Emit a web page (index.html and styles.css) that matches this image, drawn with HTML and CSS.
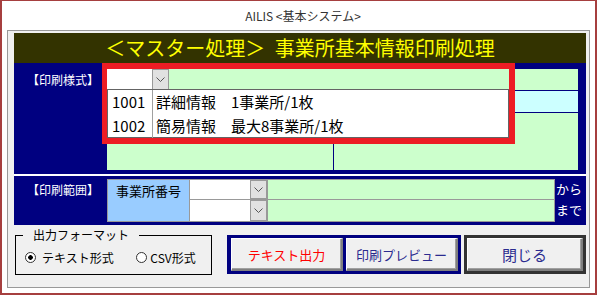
FILE: index.html
```html
<!DOCTYPE html>
<html lang="ja">
<head>
  <meta charset="UTF-8" />
  <title>AILIS &lt;基本システム&gt;</title>
  <link rel="stylesheet" href="styles.css">
</head>
<body>
  <div class="window">
    <div class="caption">AILIS &lt;基本システム&gt;</div>
    <div class="frame">
      <div class="title-bar">＜マスター処理＞ 事業所基本情報印刷処理</div>

      <div class="section style-section">
        <div class="section-label">【印刷様式】</div>
        <div class="style-body">
          <div class="style-row">
            <div class="combo">
              <div class="combo-value"></div>
              <div class="combo-btn"><svg width="9" height="5" viewBox="0 0 9 5"><polyline points="0.5,0.5 4.5,4.5 8.5,0.5" fill="none" stroke="#555" stroke-width="1"/></svg></div>
            </div>
          </div>
          <div class="style-row cyan"></div>
          <div class="style-row split">
            <div class="split-left"></div>
            <div class="split-right"></div>
          </div>
          <div class="dropdown">
            <div class="dropdown-item"><span class="code">1001</span><span class="name">詳細情報　1事業所/1枚</span></div>
            <div class="dropdown-item"><span class="code">1002</span><span class="name">簡易情報　最大8事業所/1枚</span></div>
          </div>
        </div>
        <div class="highlight"></div>
      </div>

      <div class="section range-section">
        <div class="section-label">【印刷範囲】</div>
        <div class="range-grid">
          <div class="range-name">事業所番号</div>
          <div class="combo">
            <div class="combo-value"></div>
            <div class="combo-btn"><svg width="9" height="5" viewBox="0 0 9 5"><polyline points="0.5,0.5 4.5,4.5 8.5,0.5" fill="none" stroke="#555" stroke-width="1"/></svg></div>
          </div>
          <div class="range-field"></div>
          <div class="range-suffix">から</div>
          <div class="combo second">
            <div class="combo-value"></div>
            <div class="combo-btn"><svg width="9" height="5" viewBox="0 0 9 5"><polyline points="0.5,0.5 4.5,4.5 8.5,0.5" fill="none" stroke="#555" stroke-width="1"/></svg></div>
          </div>
          <div class="range-field second"></div>
          <div class="range-suffix">まで</div>
        </div>
      </div>

      <div class="actions">
        <fieldset class="format-box">
          <legend>出力フォーマット</legend>
          <label class="radio radio-first"><span class="radio-mark checked"></span>テキスト形式</label>
          <label class="radio radio-second"><span class="radio-mark"></span>CSV形式</label>
        </fieldset>
        <div class="button-group">
          <button class="btn btn-text">テキスト出力</button>
          <button class="btn">印刷プレビュー</button>
        </div>
        <div class="close-frame">
          <button class="btn btn-close">閉じる</button>
        </div>
      </div>
    </div>
  </div>
</body>
</html>
```

FILE: styles.css
```css
* {
  box-sizing: border-box;
}

html, body {
  margin: 0;
  padding: 0;
  background: #fff;
  font-family: "Noto Sans CJK JP", "Noto Sans", sans-serif;
}

.window {
  width: 597px;
  height: 295px;
  border: 2px solid #a63f3f;
  border-top-width: 1px;
  background: #fff;
  overflow: hidden;
}

.caption {
  height: 29px;
  line-height: 30px;
  text-align: center;
  font-size: 12px;
  color: #333;
  padding-left: 9px;
}

.frame {
  margin-left: 5px;
  width: 583px;
  height: 258px;
  border: 1px solid #999;
  background: #f0f0f0;
  padding: 2px 3px 0 6px;
}

.title-bar {
  height: 30px;
  line-height: 30px;
  background: #333300;
  color: #ffff00;
  font-size: 20px;
  text-align: center;
  word-spacing: 5px;
}

.section {
  display: flex;
  position: relative;
  background: #000080;
}

.style-section {
  height: 111px;
  padding: 6px 8px 4px 0;
}

.section-label {
  width: 93px;
  flex: none;
  padding-left: 13px;
  color: #fff;
  font-size: 12px;
  line-height: 21px;
  white-space: nowrap;
}

.style-body {
  flex: 1;
  position: relative;
  display: flex;
  flex-direction: column;
  background: #ccffcc;
}

.style-row {
  height: 21px;
  flex: none;
}

.style-row.cyan {
  height: 23px;
  background: #ccffff;
  border-top: 1px solid #000080;
  border-bottom: 1px solid #000080;
}

.style-row.split {
  flex: 1;
  display: flex;
}

.split-left {
  width: 227px;
  border-right: 1px solid #000080;
}

.combo {
  display: flex;
  width: 62px;
  height: 21px;
}

.combo-value {
  flex: 1;
  background: #fff;
}

.combo-btn {
  width: 17px;
  flex: none;
  display: flex;
  align-items: center;
  justify-content: center;
  background: #e1e1e1;
  border: 1px solid #999;
}

.dropdown {
  position: absolute;
  left: 0;
  top: 20px;
  width: 402px;
  height: 49px;
  background: #fff;
  border: 1px solid #646464;
  font-size: 15px;
  color: #000;
}

.dropdown-item {
  display: flex;
  height: 24px;
  line-height: 24px;
}

.code {
  width: 45px;
  padding-left: 4px;
  border-right: 1px solid #a0a0a0;
}

.name {
  padding-left: 3px;
  white-space: pre;
}

.highlight {
  position: absolute;
  left: 88px;
  top: 0;
  width: 413px;
  height: 81px;
  border: 6px solid #ed1c24;
  border-left-width: 5px;
  pointer-events: none;
}

.range-section {
  height: 51px;
  border-top: 2px solid #fff;
  padding: 3px 0;
}

.range-grid {
  display: grid;
  grid-template-columns: 83px 78px 287px 31px;
  grid-template-rows: 21px 22px;
}

.range-name {
  grid-row: span 2;
  background: #99ccff;
  border: 1px solid #999;
  font-size: 13px;
  line-height: 21px;
  text-align: center;
  color: #000;
}

.range-grid .combo {
  width: auto;
  height: auto;
  border: 1px solid #999;
  border-left: 0;
}

.range-grid .second {
  border-top: 0;
}

.range-field {
  background: #ccffcc;
  border: 1px solid #999;
  border-left: 0;
}

.range-suffix {
  color: #fff;
  font-size: 13px;
  line-height: 20px;
  padding-left: 1px;
  white-space: nowrap;
}

.actions {
  display: flex;
  align-items: flex-start;
  margin-top: 10px;
}

.format-box {
  margin: -7px 0 0 1px;
  width: 197px;
  min-width: 0;
  border: 1px solid #000;
  padding: 7px 0 8px 7px;
  font-size: 12px;
  color: #000;
}

.format-box legend {
  padding: 0 10px;
  line-height: 14px;
}

.radio {
  display: inline-flex;
  align-items: center;
  line-height: 16px;
  white-space: nowrap;
}

.radio-first {
  margin-left: 2px;
}

.radio-first .radio-mark {
  margin-right: 6px;
}

.radio-second {
  margin-left: 20px;
}

.radio-second .radio-mark {
  margin-right: 3px;
}

.radio-mark {
  width: 11px;
  height: 11px;
  border: 1px solid #333;
  border-radius: 50%;
  background: #fff;
}

.radio-mark.checked {
  background: radial-gradient(circle, #000 0 2px, #fff 2.6px);
}

.button-group {
  display: flex;
  gap: 3px;
  margin-left: 15px;
  height: 39px;
  padding: 3px 3px 3px 4px;
  background: #000080;
}

.btn {
  width: 112px;
  height: 33px;
  padding: 0;
  font-family: inherit;
  font-size: 13px;
  color: #2b2b8f;
  background: #f0f0f0;
  border-style: solid;
  border-width: 1px 2px 2px 1px;
  border-color: #fff #808080 #808080 #fff;
  box-shadow: inset -1px -1px 0 #a0a0a0;
}

.btn-text {
  color: #ff0000;
}

.close-frame {
  margin-left: 3px;
  width: 122px;
  height: 39px;
  border: 3px solid #333;
}

.btn-close {
  width: 100%;
  height: 100%;
  font-size: 15px;
}
```
